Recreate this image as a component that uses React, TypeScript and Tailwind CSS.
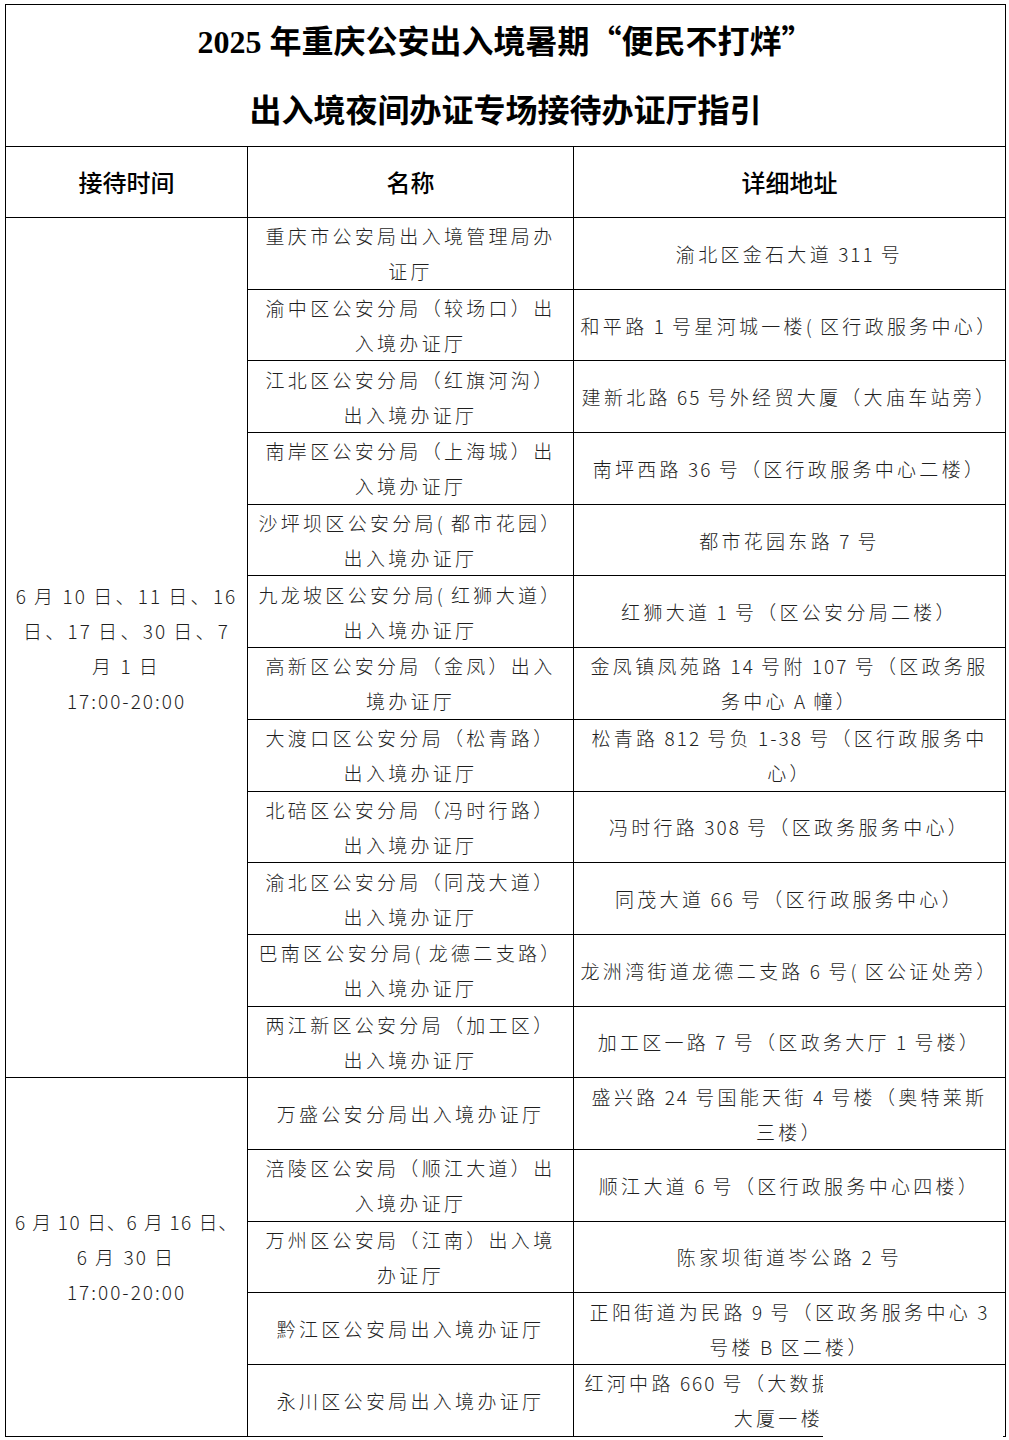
const rows1: { name: string[]; addr: string[] }[] = [
  { name: ['重庆市公安局出入境管理局办', '证厅'], addr: ['渝北区金石大道 311 号'] },
  { name: ['渝中区公安分局（较场口）出', '入境办证厅'], addr: ['和平路 1 号星河城一楼( 区行政服务中心）'] },
  { name: ['江北区公安分局（红旗河沟）', '出入境办证厅'], addr: ['建新北路 65 号外经贸大厦（大庙车站旁）'] },
  { name: ['南岸区公安分局（上海城）出', '入境办证厅'], addr: ['南坪西路 36 号（区行政服务中心二楼）'] },
  { name: ['沙坪坝区公安分局( 都市花园）', '出入境办证厅'], addr: ['都市花园东路 7 号'] },
  { name: ['九龙坡区公安分局( 红狮大道）', '出入境办证厅'], addr: ['红狮大道 1 号（区公安分局二楼）'] },
  { name: ['高新区公安分局（金凤）出入', '境办证厅'], addr: ['金凤镇凤苑路 14 号附 107 号（区政务服', '务中心 A 幢）'] },
  { name: ['大渡口区公安分局（松青路）', '出入境办证厅'], addr: ['松青路 812 号负 1-38 号（区行政服务中', '心）'] },
  { name: ['北碚区公安分局（冯时行路）', '出入境办证厅'], addr: ['冯时行路 308 号（区政务服务中心）'] },
  { name: ['渝北区公安分局（同茂大道）', '出入境办证厅'], addr: ['同茂大道 66 号（区行政服务中心）'] },
  { name: ['巴南区公安分局( 龙德二支路）', '出入境办证厅'], addr: ['龙洲湾街道龙德二支路 6 号( 区公证处旁）'] },
  { name: ['两江新区公安分局（加工区）', '出入境办证厅'], addr: ['加工区一路 7 号（区政务大厅 1 号楼）'] },
];

const rows2: { name: string[]; addr: string[] }[] = [
  { name: ['万盛公安分局出入境办证厅'], addr: ['盛兴路 24 号国能天街 4 号楼（奥特莱斯', '三楼）'] },
  { name: ['涪陵区公安局（顺江大道）出', '入境办证厅'], addr: ['顺江大道 6 号（区行政服务中心四楼）'] },
  { name: ['万州区公安局（江南）出入境', '办证厅'], addr: ['陈家坝街道岑公路 2 号'] },
  { name: ['黔江区公安局出入境办证厅'], addr: ['正阳街道为民路 9 号（区政务服务中心 3', '号楼 B 区二楼）'] },
  { name: ['永川区公安局出入境办证厅'], addr: ['红河中路 660 号（大数据产业园 B 区二公', '大厦一楼）'] },
];

const body = "font-['Noto_Sans_CJK_SC',sans-serif] font-light text-[19px] leading-[35px] tracking-[3.3px] text-[#1f1f1f]";

// Latin runs (digits, brackets, spaces) sit tighter than the CJK characters
function Txt({ s, latin = 'tracking-[2px]' }: { s: string; latin?: string }) {
  const parts = s.split(/([\x20-\x7e]+)/).filter(Boolean);
  return (
    <>
      {parts.map((p, i) =>
        /^[\x20-\x7e]+$/.test(p) ? (
          <span key={i} className={latin}>
            {p}
          </span>
        ) : (
          <span key={i}>{p}</span>
        ),
      )}
    </>
  );
}

function Lines({ lines }: { lines: string[] }) {
  return (
    <>
      {lines.map((l, i) => (
        <div key={i} className="whitespace-nowrap">
          <Txt s={l} />
        </div>
      ))}
    </>
  );
}

type R = { name: string[]; addr: string[] };

function Row({ r, first }: { r: R; first?: React.ReactNode }) {
  return (
    <tr className="h-[71.7px]">
      {first}
      <td className="border border-black px-1 text-center align-middle">
        <div className={body}>
          <Lines lines={r.name} />
        </div>
      </td>
      <td className="border border-black px-1 text-center align-middle">
        <div className={body}>
          <Lines lines={r.addr} />
        </div>
      </td>
    </tr>
  );
}

export default function App() {
  const q = "font-['Noto_Sans_CJK_SC',sans-serif]";
  return (
    <div className="relative min-h-[1440px] w-[1009px] overflow-hidden bg-white">
      <div className="pl-[5px] pt-[4px]">
        <table className="w-[1000px] table-fixed border-collapse">
          <colgroup>
            <col className="w-[242px]" />
            <col className="w-[326px]" />
            <col className="w-[432px]" />
          </colgroup>
          <tbody>
            <tr className="h-[142px]">
              <td colSpan={3} className="h-[142px] border border-black p-0 text-center align-middle">
                <div className="flex h-[140px] flex-col font-['Liberation_Serif','Noto_Sans_CJK_SC',serif] text-[32px] font-bold leading-none text-black">
                  <div className="flex h-[70px] items-center justify-center">
                    <span>
                      2025 年重庆公安出入境暑期<span className={q}>“</span>便民不打烊<span className={q}>”</span>
                    </span>
                  </div>
                  <div className="flex h-[70px] items-center justify-center">出入境夜间办证专场接待办证厅指引</div>
                </div>
              </td>
            </tr>
            <tr className="h-[71px]">
              {['接待时间', '名称', '详细地址'].map((h) => (
                <td
                  key={h}
                  className="border border-black text-center align-middle font-['Noto_Sans_CJK_SC',sans-serif] text-[24px] font-medium text-black"
                >
                  {h}
                </td>
              ))}
            </tr>
            {rows1.map((r, i) => (
              <Row
                key={'a' + i}
                r={r}
                first={
                  i === 0 ? (
                    <td rowSpan={12} className="border border-black text-center align-middle">
                      <div className={body}>
                        <Lines lines={['6 月 10 日、11 日、16', '日、17 日、30 日、7', '月 1 日', '17:00-20:00']} />
                      </div>
                    </td>
                  ) : null
                }
              />
            ))}
            {rows2.map((r, i) => (
              <Row
                key={'b' + i}
                r={r}
                first={
                  i === 0 ? (
                    <td rowSpan={5} className="border border-black text-center align-middle">
                      <div className={body}>
                        <div className="whitespace-nowrap tracking-[0.8px]">
                          <Txt s="6 月 10 日、6 月 16 日、" latin="tracking-[1.5px]" />
                        </div>
                        <Lines lines={['6 月 30 日', '17:00-20:00']} />
                      </div>
                    </td>
                  ) : null
                }
              />
            ))}
          </tbody>
        </table>
      </div>
      {/* clipped corner of the source scan */}
      <div className="absolute left-[823px] top-[1373px] h-[80px] w-[180px] bg-white" />
    </div>
  );
}
